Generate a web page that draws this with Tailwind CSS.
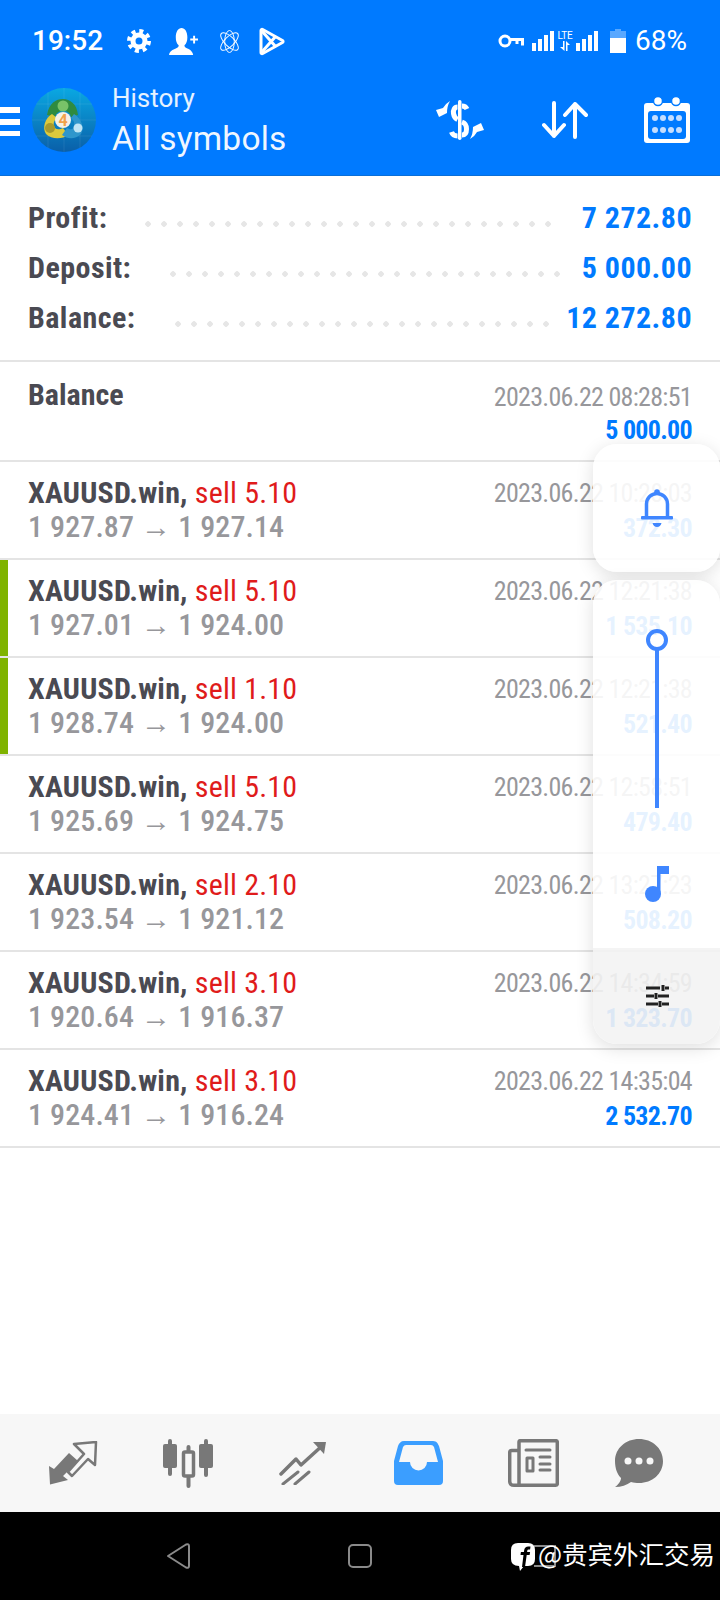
<!DOCTYPE html>
<html lang="en">
<head>
<meta charset="UTF-8">
<meta name="viewport" content="width=device-width, initial-scale=1.0">
<title>History</title>
<script src="https://cdn.jsdelivr.net/npm/@tailwindcss/browser@4"></script>
</head>
<body class="relative w-[720px] h-[1600px] overflow-hidden bg-white font-['Roboto',sans-serif]">
<div class="flex flex-col h-full">
  <!-- Status bar + app header -->
  <header class="h-[176px] bg-[#007aff] border-b border-[#0a6fd8] text-white shrink-0">
    <div class="h-[72px] pt-[10px] flex items-center pl-[32px] pr-[33px]">
      <span class="text-[28px] font-medium leading-none w-[95px]">19:52</span>
      <!-- gear -->
      <svg class="w-[24px] h-[24px] mr-[18px]" viewBox="0 0 24 24" fill="none" stroke="#fff"><circle cx="12" cy="12" r="6" stroke-width="5"/><circle cx="12" cy="12" r="10" stroke-width="4" stroke-dasharray="4 3.85"/></svg>
      <!-- user plus -->
      <svg class="w-[29px] h-[27px] mr-[20px]" viewBox="0 0 30 28" fill="#fff"><path d="M0 28c.5-4 4-5.500 7-6.700 2.500-1 3-2 3-3.300-2-2-3-4.500-3-8.500C7 4 9.500 0 13 0s6 4 6 9.500c0 4-1 6.500-3 8.500 0 1.300.5 2.300 3 3.300 2 .8 5.500 2.700 6 6.700z"/><path d="M22 11h3V8h2v3h3v2h-3v3h-2v-3h-3z"/></svg>
      <!-- atom -->
      <svg class="w-[23px] h-[23px] mr-[18px]" viewBox="0 0 24 24" fill="none" stroke="#fff" stroke-width="1"><ellipse cx="12" cy="12" rx="12" ry="5" transform="rotate(45 12 12)"/><ellipse cx="12" cy="12" rx="12" ry="5" transform="rotate(-45 12 12)"/><ellipse cx="12" cy="12" rx="5" ry="11.500"/></svg>
      <!-- play -->
      <svg class="w-[26px] h-[29px]" viewBox="0 0 26 29" fill="none" stroke="#fff" stroke-width="3" stroke-linejoin="round"><path d="M2 3.500v22c0 1 .8 1.500 1.700 1L23.500 15.500c.8-.5.8-1.500 0-2L3.700 2.500C2.800 2 2 2.500 2 3.500z"/><path d="M2 3l15 17M2 26l15-17"/></svg>
      <div class="flex-1"></div>
      <!-- key -->
      <svg class="w-[26px] h-[14px] mr-[8px]" viewBox="0 0 26 14" fill="none" stroke="#fff" stroke-width="3"><circle cx="7" cy="7" r="5"/><path d="M12 5.500h12.500v6M19 5.500v4.500"/></svg>
      <!-- signal 1 -->
      <svg class="w-[22px] h-[20px] mr-[1px]" viewBox="0 0 22 20" fill="#fff"><rect x="0" y="12" width="4" height="8"/><rect x="6" y="8" width="4" height="12"/><rect x="12" y="4" width="4" height="16"/><rect x="18" y="0" width="4" height="20"/></svg>
      <div class="w-[20px] h-[20px] flex flex-col items-center leading-none mr-[1px]">
        <span class="text-[10px] leading-[10px] tracking-[-0.3px]">LTE</span>
        <svg class="w-[12px] h-[10px]" viewBox="0 0 12 10" fill="#fff"><path d="M4 0h1.500v10L1 6h3zM7 0v10h1.500V4H11L7 0z"/></svg>
      </div>
      <svg class="w-[22px] h-[20px] mr-[12px]" viewBox="0 0 22 20" fill="#fff"><rect x="0" y="12" width="4" height="8"/><rect x="6" y="8" width="4" height="12"/><rect x="12" y="4" width="4" height="16"/><rect x="18" y="0" width="4" height="20"/></svg>
      <!-- battery -->
      <svg class="w-[16px] h-[24px] mr-[9px]" viewBox="0 0 16 24" fill="#fff"><path d="M5 0h6v2h5v7H0V2h5z" fill-opacity=".35"/><rect y="9" width="16" height="15"/></svg>
      <span class="text-[28px] leading-none">68%</span>
    </div>
    <div class="h-[96px] flex items-center">
      <div class="w-[20px] flex flex-col gap-[6px] mr-[12px] mt-[2px]">
        <div class="h-[6px] bg-white"></div><div class="h-[6px] bg-white"></div><div class="h-[5px] bg-white"></div>
      </div>
      <!-- terminal logo -->
      <svg class="w-[64px] h-[64px] mr-[16px]" viewBox="0 0 64 64">
        <defs>
          <linearGradient id="logoBg" x1="0" y1="0" x2="0" y2="1"><stop offset="0" stop-color="#0aa8e2"/><stop offset="1" stop-color="#0a5fa8"/></linearGradient>
        </defs>
        <circle cx="32" cy="32" r="32" fill="url(#logoBg)"/>
        <path d="M0 32h64M32 0v64M16 4v56M48 4v56M4 16h56M4 48h56" stroke="#fff" stroke-opacity=".08" stroke-width="1"/>
        <path d="M15 27C17 15 24 11 31 11s14 5 15 16l-7 2c-1-5-4-6-8-6s-7 2-8 6z" fill="#2f8b3f"/>
        <circle cx="31" cy="18" r="5.500" fill="#79c268"/>
        <path d="M20 26c-7 4-10 14-6 20 6 6 17 5 22 1l-5-7c-4 2-8 2-9-2s1-6 3-8z" fill="#dcc93c"/>
        <circle cx="18" cy="40" r="5" fill="#a89a2c"/>
        <path d="M42 26c7 4 11 14 7 20-6 6-14 5-19 1l5-7c4 2 6 2 7-2s-1-6-3-8z" fill="#2f96cc"/>
        <circle cx="46" cy="40" r="4.500" fill="#bfe4f5"/>
        <circle cx="31" cy="32" r="8" fill="#f6f1e6"/>
        <text x="31" y="38" font-size="16" font-weight="700" fill="#f2a24a" text-anchor="middle" font-family="Roboto">4</text>
      </svg>
      <div class="flex flex-col w-[324px] -mt-[3px]">
        <span class="text-[26px] leading-[32px] text-white/90">History</span>
        <span class="text-[33.5px] leading-[32px] mt-[9px] text-white/95 tracking-[0.2px]">All symbols</span>
      </div>
      <!-- swap dollar -->
      <svg class="w-[48px] h-[40px] mr-[58px]" viewBox="0 0 48 40" fill="#fff">
        <rect x="22" y="0" width="3.500" height="40" rx="1.700"/>
        <g fill="none" stroke="#fff" stroke-width="5"><path d="M21.500 7c-3 0-4.500 3-4 6.500.5 3 2 5 4 6"/><path d="M26 22c3 1 4.500 4 4.500 7 0 4-1.500 6-4.500 6"/><path d="M21.500 36c-3 0-5-1-6-4"/><path d="M26 6c2 0 4 1 5 3"/></g>
        <path d="M0 10l7-2q2-4 7-7-3 5-3 12l-8 4z"/>
        <path d="M48 30l-7 2q-2 4-7 7 3-5 3-12l8-4z"/>
      </svg>
      <!-- sort arrows -->
      <svg class="w-[46px] h-[38px] mr-[56px]" viewBox="0 0 46 38" fill="none" stroke="#fff" stroke-width="4" stroke-linecap="round" stroke-linejoin="round"><path d="M12 2v33M2 24l10 11 10-11"/><path d="M33 36V3M23 14L33 3l11 11"/></svg>
      <!-- calendar -->
      <svg class="w-[46px] h-[46px]" viewBox="0 0 46 46">
        <path d="M3 6h40a3 3 0 0 1 3 3v34a3 3 0 0 1-3 3H3a3 3 0 0 1-3-3V9a3 3 0 0 1 3-3z" fill="#fff"/>
        <circle cx="14" cy="4" r="4.500" fill="#fff" stroke="#007aff" stroke-width="1.500"/>
        <circle cx="32" cy="4" r="4.500" fill="#fff" stroke="#007aff" stroke-width="1.500"/>
        <rect x="4" y="14" width="38" height="28" rx="3" fill="#007aff"/>
        <g fill="#c5deff"><circle cx="11" cy="21" r="3"/><circle cx="19" cy="21" r="3"/><circle cx="27" cy="21" r="3"/><circle cx="35" cy="21" r="3"/><circle cx="11" cy="33" r="3"/><circle cx="19" cy="33" r="3"/><circle cx="27" cy="33" r="3"/><circle cx="35" cy="33" r="3"/></g>
      </svg>
    </div>
  </header>

  <!-- Summary -->
  <section class="h-[186px] pt-[21px] pl-[28px] pr-[28px] border-b-2 border-[#e4e4e4] shrink-0 flex flex-col gap-[10px] [font-stretch:87.5%] text-[30px] font-bold tracking-[0.45px]">
    <div class="h-[40px] flex items-center">
      <span class="text-[#4a4a52] w-[112px]">Profit:</span>
      <span class="w-[416px] h-[6px] mt-[14px] bg-[radial-gradient(circle,#e6e6e6_2.5px,transparent_3px)] bg-[length:16px_6px]"></span>
      <span class="flex-1 text-right text-[#007aff]">7 272.80</span>
    </div>
    <div class="h-[40px] flex items-center">
      <span class="text-[#4a4a52] w-[137px]">Deposit:</span>
      <span class="w-[400px] h-[6px] mt-[14px] bg-[radial-gradient(circle,#e6e6e6_2.5px,transparent_3px)] bg-[length:16px_6px]"></span>
      <span class="flex-1 text-right text-[#007aff]">5 000.00</span>
    </div>
    <div class="h-[40px] flex items-center">
      <span class="text-[#4a4a52] w-[142px]">Balance:</span>
      <span class="w-[384px] h-[6px] mt-[14px] bg-[radial-gradient(circle,#e6e6e6_2.5px,transparent_3px)] bg-[length:16px_6px]"></span>
      <span class="flex-1 text-right text-[#007aff]">12 272.80</span>
    </div>
  </section>

  <!-- Deals -->
  <section class="flex-1">
    <div class="h-[100px] border-b-2 border-[#e4e4e4] pl-[28px] pr-[28px] pt-[15px] flex justify-between">
      <span class="text-[30px] font-bold leading-[36px] text-[#4a4a52] [font-stretch:87.5%]">Balance</span>
      <div class="text-right mt-[2px] [font-stretch:75%] tracking-[-0.7px]">
        <div class="text-[26px] leading-[36px] text-[#97979b]">2023.06.22 08:28:51</div>
        <div class="text-[26px] font-bold leading-[30px] text-[#007aff]">5 000.00</div>
      </div>
    </div>

    <div class="h-[98px] border-b-2 border-[#e4e4e4] pl-[28px] pr-[28px] pt-[13px] flex justify-between">
      <div class="[font-stretch:87.5%]">
        <div class="text-[30px] leading-[36px] font-bold text-[#4a4a52] tracking-[0.2px]">XAUUSD.win, <span class="font-normal text-[#e01b1b]">sell 5.10</span></div>
        <div class="text-[30px] leading-[32px] font-medium text-[#97979b] tracking-[0.1px]">1 927.87 <span class="font-normal">→</span> 1 927.14</div>
      </div>
      <div class="text-right [font-stretch:75%] tracking-[-0.7px]">
        <div class="text-[26px] leading-[36px] text-[#97979b]">2023.06.22 10:28:03</div>
        <div class="text-[26px] font-bold leading-[34px] text-[#007aff]">372.30</div>
      </div>
    </div>

    <div class="h-[98px] border-b-2 border-[#e4e4e4] flex">
      <div class="w-[8px] bg-[#7fb300]"></div>
      <div class="flex-1 pl-[20px] pr-[28px] pt-[13px] flex justify-between">
        <div class="[font-stretch:87.5%]">
          <div class="text-[30px] leading-[36px] font-bold text-[#4a4a52] tracking-[0.2px]">XAUUSD.win, <span class="font-normal text-[#e01b1b]">sell 5.10</span></div>
          <div class="text-[30px] leading-[32px] font-medium text-[#97979b] tracking-[0.1px]">1 927.01 <span class="font-normal">→</span> 1 924.00</div>
        </div>
        <div class="text-right [font-stretch:75%] tracking-[-0.7px]">
          <div class="text-[26px] leading-[36px] text-[#97979b]">2023.06.22 12:21:38</div>
          <div class="text-[26px] font-bold leading-[34px] text-[#007aff]">1 535.10</div>
        </div>
      </div>
    </div>

    <div class="h-[98px] border-b-2 border-[#e4e4e4] flex">
      <div class="w-[8px] bg-[#7fb300]"></div>
      <div class="flex-1 pl-[20px] pr-[28px] pt-[13px] flex justify-between">
        <div class="[font-stretch:87.5%]">
          <div class="text-[30px] leading-[36px] font-bold text-[#4a4a52] tracking-[0.2px]">XAUUSD.win, <span class="font-normal text-[#e01b1b]">sell 1.10</span></div>
          <div class="text-[30px] leading-[32px] font-medium text-[#97979b] tracking-[0.1px]">1 928.74 <span class="font-normal">→</span> 1 924.00</div>
        </div>
        <div class="text-right [font-stretch:75%] tracking-[-0.7px]">
          <div class="text-[26px] leading-[36px] text-[#97979b]">2023.06.22 12:21:38</div>
          <div class="text-[26px] font-bold leading-[34px] text-[#007aff]">521.40</div>
        </div>
      </div>
    </div>

    <div class="h-[98px] border-b-2 border-[#e4e4e4] pl-[28px] pr-[28px] pt-[13px] flex justify-between">
      <div class="[font-stretch:87.5%]">
        <div class="text-[30px] leading-[36px] font-bold text-[#4a4a52] tracking-[0.2px]">XAUUSD.win, <span class="font-normal text-[#e01b1b]">sell 5.10</span></div>
        <div class="text-[30px] leading-[32px] font-medium text-[#97979b] tracking-[0.1px]">1 925.69 <span class="font-normal">→</span> 1 924.75</div>
      </div>
      <div class="text-right [font-stretch:75%] tracking-[-0.7px]">
        <div class="text-[26px] leading-[36px] text-[#97979b]">2023.06.22 12:58:51</div>
        <div class="text-[26px] font-bold leading-[34px] text-[#007aff]">479.40</div>
      </div>
    </div>

    <div class="h-[98px] border-b-2 border-[#e4e4e4] pl-[28px] pr-[28px] pt-[13px] flex justify-between">
      <div class="[font-stretch:87.5%]">
        <div class="text-[30px] leading-[36px] font-bold text-[#4a4a52] tracking-[0.2px]">XAUUSD.win, <span class="font-normal text-[#e01b1b]">sell 2.10</span></div>
        <div class="text-[30px] leading-[32px] font-medium text-[#97979b] tracking-[0.1px]">1 923.54 <span class="font-normal">→</span> 1 921.12</div>
      </div>
      <div class="text-right [font-stretch:75%] tracking-[-0.7px]">
        <div class="text-[26px] leading-[36px] text-[#97979b]">2023.06.22 13:27:23</div>
        <div class="text-[26px] font-bold leading-[34px] text-[#007aff]">508.20</div>
      </div>
    </div>

    <div class="h-[98px] border-b-2 border-[#e4e4e4] pl-[28px] pr-[28px] pt-[13px] flex justify-between">
      <div class="[font-stretch:87.5%]">
        <div class="text-[30px] leading-[36px] font-bold text-[#4a4a52] tracking-[0.2px]">XAUUSD.win, <span class="font-normal text-[#e01b1b]">sell 3.10</span></div>
        <div class="text-[30px] leading-[32px] font-medium text-[#97979b] tracking-[0.1px]">1 920.64 <span class="font-normal">→</span> 1 916.37</div>
      </div>
      <div class="text-right [font-stretch:75%] tracking-[-0.7px]">
        <div class="text-[26px] leading-[36px] text-[#97979b]">2023.06.22 14:34:59</div>
        <div class="text-[26px] font-bold leading-[34px] text-[#007aff]">1 323.70</div>
      </div>
    </div>

    <div class="h-[98px] border-b-2 border-[#e4e4e4] pl-[28px] pr-[28px] pt-[13px] flex justify-between">
      <div class="[font-stretch:87.5%]">
        <div class="text-[30px] leading-[36px] font-bold text-[#4a4a52] tracking-[0.2px]">XAUUSD.win, <span class="font-normal text-[#e01b1b]">sell 3.10</span></div>
        <div class="text-[30px] leading-[32px] font-medium text-[#97979b] tracking-[0.1px]">1 924.41 <span class="font-normal">→</span> 1 916.24</div>
      </div>
      <div class="text-right [font-stretch:75%] tracking-[-0.7px]">
        <div class="text-[26px] leading-[36px] text-[#97979b]">2023.06.22 14:35:04</div>
        <div class="text-[26px] font-bold leading-[34px] text-[#007aff]">2 532.70</div>
      </div>
    </div>
  </section>

  <!-- Tab bar -->
  <nav class="h-[98px] bg-[#f7f7f7] shrink-0 flex items-center pl-[49px]">
    <svg class="w-[50px] h-[44px] mr-[64px]" viewBox="0 0 50 44" fill="#787878">
      <path d="M0 25l5 3L20 12l9 8-15 15 5 4-18 4.500z"/>
      <path d="M25 3L47 1l-1 23-7-6-16 17-4-4L35 13z" fill="none" stroke="#787878" stroke-width="2.500" stroke-linejoin="round"/>
    </svg>
    <svg class="w-[50px] h-[49px] mr-[66px]" viewBox="0 0 50 49" fill="#787878">
      <path d="M7 2v33M25.500 8v39M43 2v34" stroke="#787878" stroke-width="4" stroke-linecap="round"/>
      <rect x="0" y="5" width="14" height="24" rx="2"/>
      <rect x="36" y="5" width="14" height="24" rx="2"/>
      <rect x="20.500" y="13" width="10" height="24" rx="1.500" fill="#f7f7f7" stroke="#787878" stroke-width="3.500"/>
    </svg>
    <svg class="w-[48px] h-[44px] mr-[67px]" viewBox="0 0 48 44" fill="none" stroke="#787878" stroke-width="3.500" stroke-linecap="round" stroke-linejoin="round">
      <path d="M2 33l15-15 5 6L44 4"/>
      <path d="M34 1h13l-2 12z" fill="#787878" stroke="none"/>
      <path d="M4 43l15-12M16 43l14-12" stroke-width="3"/>
    </svg>
    <svg class="w-[49px] h-[44px] mr-[65px]" viewBox="0 0 49 44">
      <path d="M10 0h29c4 0 5 3 6 5l4 15v20q0 4-4 4H4q-4 0-4-4V20L4 5c1-3 3-5 6-5z" fill="#3b9eff"/>
      <path d="M12 4h25q2 0 3 2l4 15H33a8.500 8.500 0 0 1-17 0H5L9 6q1-2 3-2z" fill="#f7f7f7"/>
    </svg>
    <svg class="w-[51px] h-[48px] mr-[56px]" viewBox="0 0 51 48" fill="none" stroke="#787878" stroke-width="3.500" stroke-linejoin="round">
      <path d="M11 46.200V3q0-1.300 1.300-1.300h35.500q1.500 0 1.500 1.500v41.500q0 1.500-1.500 1.500H6q-4.300 0-4.300-4.300V13.500q0-2 2-2H11"/>
      <path d="M18 11h24M32 18h10M32 25h10M32 31h10" stroke-width="3" stroke-linecap="round"/>
      <rect x="19" y="19" width="6" height="13" stroke-width="3"/>
    </svg>
    <svg class="w-[48px] h-[48px]" viewBox="0 0 48 48">
      <path d="M24 0c13 0 24 9 24 22S37 44 24 44c-3 0-5-.3-8-1-4 3-10 5-16 5 3-2 6-6 6-9C2 35 0 29 0 22 0 9 11 0 24 0z" fill="#787878"/>
      <circle cx="13" cy="22" r="3.500" fill="#f7f7f7"/><circle cx="24" cy="22" r="3.500" fill="#f7f7f7"/><circle cx="35" cy="22" r="3.500" fill="#f7f7f7"/>
    </svg>
  </nav>

  <!-- Android navigation -->
  <div class="h-[88px] bg-black shrink-0 flex items-center pl-[166px]">
    <svg class="w-[24px] h-[28px] mr-[158px]" viewBox="0 0 24 28" fill="none" stroke="#8a8a8a" stroke-width="2" stroke-linejoin="round"><path d="M2 14L20 2.500q3-1 3 1.500v20q0 2.500-3 1.500z"/></svg>
    <svg class="w-[24px] h-[24px] mr-[158px]" viewBox="0 0 24 24" fill="none" stroke="#8a8a8a" stroke-width="2"><rect x="1" y="1" width="22" height="22" rx="4"/></svg>
    <svg class="w-[26px] h-[22px]" viewBox="0 0 26 22" fill="none" stroke="#8a8a8a" stroke-width="2"><path d="M4 1h21v20H4"/></svg>
  </div>
</div>

<!-- Floating assistant panels -->
<div class="absolute left-[593px] top-[444px] w-[127px] h-[128px] bg-white/90 rounded-[24px] shadow-[0_4px_18px_rgba(0,0,0,0.13)] flex items-start justify-center pt-[45px]">
  <svg class="w-[32px] h-[39px]" viewBox="0 0 32 39" fill="#3f86ff">
    <circle cx="16" cy="3" r="2.800"/>
    <path d="M5.500 28V15a10.500 10.500 0 0 1 21 0v13" fill="none" stroke="#3f86ff" stroke-width="3.500"/>
    <rect y="27" width="32" height="3.500" rx="1"/>
    <path d="M11.500 34h9q-1 4-4.500 4t-4.500-4z"/>
  </svg>
</div>
<div class="absolute left-[593px] top-[580px] w-[127px] h-[464px] bg-white/90 rounded-[24px] shadow-[0_4px_18px_rgba(0,0,0,0.13)] flex flex-col overflow-hidden">
  <div class="h-[368px] flex flex-col items-center pt-[48px]">
    <svg class="w-[24px] h-[180px]" viewBox="0 0 24 180" fill="none" stroke="#3f86ff" stroke-width="4"><circle cx="12" cy="12" r="9"/><path d="M12 21v159"/></svg>
    <svg class="w-[24px] h-[36px] mt-[58px]" viewBox="0 0 24 36" fill="#3f86ff"><path d="M12 0h12v8H15.500v20H12z"/><circle cx="8" cy="28" r="8"/></svg>
  </div>
  <div class="flex-1 bg-black/[0.045] flex items-center justify-center">
    <svg class="w-[24px] h-[22px]" viewBox="0 0 24 22" fill="none" stroke="#222" stroke-width="3"><path d="M1 3h14M18 0v6M20 3h4M1 11h8M11 8v6M13 11h11M1 19h12M15 16v6M17 19h7"/></svg>
  </div>
</div>

<!-- Watermark -->
<div class="absolute left-[511px] top-[1535px] flex items-center text-white text-[25.5px] leading-[32px] font-['Noto_Sans_CJK_SC','Roboto',sans-serif]">
  <svg class="w-[24px] h-[28px] mt-[8px] mr-[3px]" viewBox="0 0 24 28"><path d="M7 0h10q7 0 7 7v9q0 7-7 7h-4l-4 5-1-5q-8 0-8-7V7q0-7 7-7z" fill="#fff"/><path d="M11 24l1.500-12H9.500l.4-3h3l.3-2q.6-3.500 4-3.500h2.300l-.4 3h-1.600q-1 0-1.200 1l-.2 1.500h3l-.5 3h-2.900L14 24z" fill="#000"/></svg>
  <span>@贵宾外汇交易</span>
</div>
</body>
</html>
